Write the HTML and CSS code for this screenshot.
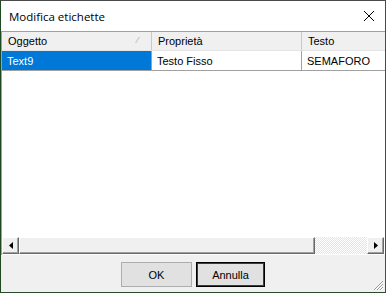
FILE: index.html
```html
<!DOCTYPE html>
<html lang="it">

<head>
    <meta charset="UTF-8">
    <meta name="viewport" content="width=device-width, initial-scale=1.0">
    <title>Modifica etichette</title>
    <link rel="stylesheet" href="styles.css">
</head>

<body>
    <div class="dialog">
        <div class="titlebar">
            <span class="title">Modifica etichette</span>
            <svg class="close" width="12" height="12" viewBox="0 0 12 12">
                <path d="M1 1 L11 11 M11 1 L1 11" stroke="#000" stroke-width="1" fill="none" />
            </svg>
        </div>

        <div class="grid">
            <div class="grid-body">
                <div class="row header">
                    <div class="cell">Oggetto<span class="sort">⁄</span></div>
                    <div class="cell">Proprietà</div>
                    <div class="cell">Testo</div>
                </div>
                <div class="row">
                    <div class="cell selected">Text9</div>
                    <div class="cell">Testo Fisso</div>
                    <div class="cell">SEMAFORO</div>
                </div>
            </div>
            <div class="hscroll">
                <div class="sb-btn">
                    <svg width="4" height="7" viewBox="0 0 4 7"><path d="M4 0 L0 3.5 L4 7 Z" fill="#000" /></svg>
                </div>
                <div class="sb-thumb"></div>
                <div class="sb-track"></div>
                <div class="sb-btn">
                    <svg width="4" height="7" viewBox="0 0 4 7"><path d="M0 0 L4 3.5 L0 7 Z" fill="#000" /></svg>
                </div>
            </div>
        </div>

        <div class="buttons">
            <button class="btn">OK</button>
            <button class="btn default">Annulla</button>
        </div>

        <svg class="grip" width="12" height="12" viewBox="0 0 12 12">
            <path d="M11 2 L2 11 M11 5 L5 11 M11 8 L8 11" stroke="#9a9a9a" stroke-width="1" fill="none" />
            <path d="M11 3 L3 11 M11 6 L6 11 M11 9 L9 11" stroke="#fff" stroke-width="1" fill="none" />
        </svg>
    </div>
</body>

</html>
```

FILE: styles.css
```css
body {
    margin: 0;
    background-color: #1f4a22;
}

.dialog {
    position: relative;
    width: 386px;
    height: 293px;
    box-sizing: border-box;
    border: 1px solid #4a4a4a;
    border-left-color: #1e4a22;
    border-bottom-color: #2a4a2a;
    background-color: #f0f0f0;
    display: flex;
    flex-direction: column;
    font-family: "Liberation Sans", Arial, sans-serif;
    font-size: 11px;
    color: #000;
}

.titlebar {
    height: 30px;
    background-color: #fff;
    display: flex;
    align-items: center;
    justify-content: space-between;
    padding: 0 9px 0 8px;
    flex-shrink: 0;
}

.title {
    font-family: "Open Sans", "Noto Sans", sans-serif;
    font-size: 11.5px;
    color: #000;
}

.close {
    margin-right: 1px;
}

.grid {
    flex: 1;
    display: flex;
    flex-direction: column;
    border-top: 1px solid #a0a0a0;
    border-left: 1px solid #a0a0a0;
    background-color: #fff;
}

.grid-body {
    flex: 1;
}

.row {
    display: grid;
    grid-template-columns: 150px 150px 1fr;
    height: 20px;
    border-bottom: 1px solid #a0a0a0;
    box-sizing: border-box;
}

.row.header {
    height: 19px;
    background-color: #f0f0f0;
    border-bottom: 1px solid #e3e3e3;
}

.cell {
    display: flex;
    align-items: center;
    padding-left: 5px;
    border-right: 1px solid #a0a0a0;
    white-space: nowrap;
    overflow: hidden;
}

.header .cell {
    padding-left: 6px;
    border-right: 1px solid #c8c8c8;
    position: relative;
}

.cell:last-child {
    border-right: none;
}

.cell.selected {
    background-color: #0078d7;
    color: #fff;
}

.sort {
    position: absolute;
    left: 135px;
    top: 3px;
    color: #a8a8a8;
    font-size: 9px;
}

.hscroll {
    display: flex;
    height: 17px;
    margin: 0 1px 1px 0;
    background-color: #f0f0f0;
}

.sb-btn,
.sb-thumb {
    box-sizing: border-box;
    height: 17px;
    background-color: #f0f0f0;
    border: 1px solid;
    border-color: #fff #696969 #696969 #fff;
    box-shadow: inset -1px -1px 0 #a0a0a0;
}

.sb-btn {
    width: 17px;
    display: flex;
    align-items: center;
    justify-content: center;
}

.sb-thumb {
    width: 296px;
}

.sb-track {
    flex: 1;
    background-color: #fff;
    background-image: repeating-conic-gradient(#e4e4e4 0 25%, #fff 0 50%);
    background-size: 2px 2px;
}

.buttons {
    height: 37px;
    flex-shrink: 0;
    display: flex;
    justify-content: center;
    align-items: flex-start;
    gap: 4px;
    padding-top: 7px;
    box-sizing: border-box;
}

.btn {
    width: 71px;
    height: 25px;
    background-color: #e1e1e1;
    border: 1px solid #adadad;
    font-family: "Liberation Sans", Arial, sans-serif;
    font-size: 11px;
    color: #000;
    padding: 0;
}

.btn.default {
    width: 69px;
    border: 1px solid #000;
    box-shadow: inset 0 0 0 1px #3c3c3c;
}

.grip {
    position: absolute;
    right: 1px;
    bottom: 1px;
}
```
